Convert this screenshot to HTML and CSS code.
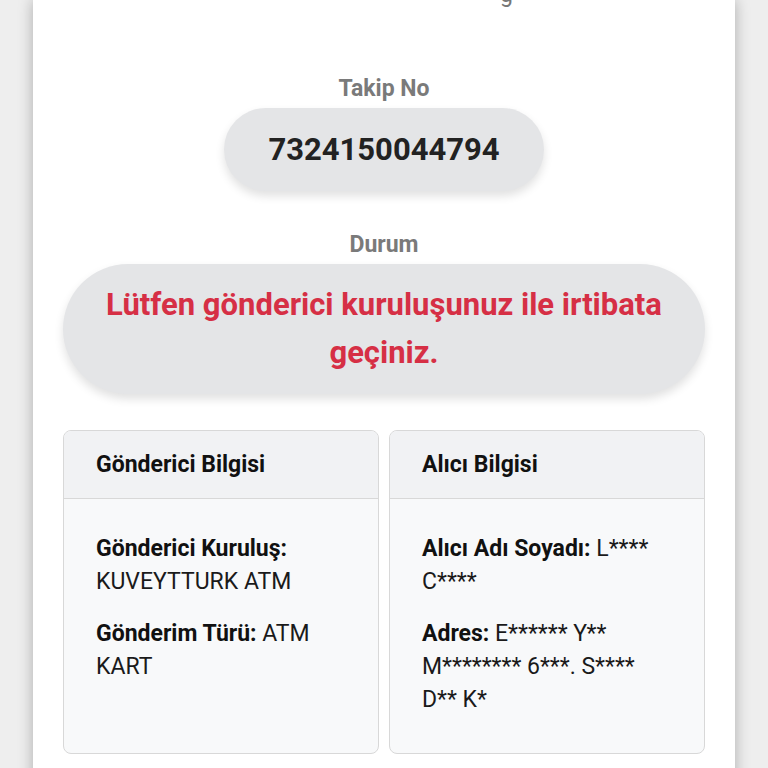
FILE: index.html
```html
<!DOCTYPE html>
<html lang="tr">
<head>
<meta charset="utf-8">
<title>Gönderi Takip</title>
<link rel="stylesheet" href="styles.css">
</head>
<body>
<div class="page">
  <div class="cut-row"><span class="cut-text">g</span></div>
  <section class="field">
    <div class="field-label">Takip No</div>
    <div class="pill pill-track">7324150044794</div>
  </section>
  <section class="field field-status">
    <div class="field-label">Durum</div>
    <div class="pill pill-status">Lütfen gönderici kuruluşunuz ile irtibata geçiniz.</div>
  </section>
  <div class="cards">
    <div class="card">
      <div class="card-header">Gönderici Bilgisi</div>
      <div class="card-body">
        <p><b>Gönderici Kuruluş:</b> KUVEYTTURK ATM</p>
        <p><b>Gönderim Türü:</b> ATM KART</p>
      </div>
    </div>
    <div class="card">
      <div class="card-header">Alıcı Bilgisi</div>
      <div class="card-body">
        <p><b>Alıcı Adı Soyadı:</b> L**** C****</p>
        <p><b>Adres:</b> E****** Y** M******** 6***. S**** D** K*</p>
      </div>
    </div>
  </div>
</div>
</body>
</html>
```
FILE: styles.css
```css
html, body {
  margin: 0;
  padding: 0;
}
body {
  background: #eeeeee;
  font-family: Roboto, "Noto Sans", "Liberation Sans", sans-serif;
  color: #212529;
}
.page {
  width: 642px;
  margin: 0 auto;
  padding: 0 30px 20px;
  background: #ffffff;
  box-shadow: 0 0 14px rgba(0, 0, 0, 0.28);
  min-height: 768px;
}
.cut-row {
  height: 10px;
  overflow: hidden;
  position: relative;
}
.cut-text {
  position: absolute;
  left: 437px;
  top: -17px;
  font-size: 23px;
  line-height: 24px;
  color: #777777;
}
.field {
  display: flex;
  flex-direction: column;
  align-items: center;
  padding-top: 67px;
}
.field-status {
  padding-top: 42px;
}
.field-label {
  font-size: 23px;
  line-height: 24px;
  font-weight: 700;
  color: #7a7a7a;
  margin-bottom: 7px;
}
.pill {
  background: #e4e5e7;
  box-shadow: 0 5px 10px rgba(0, 0, 0, 0.12);
  text-align: center;
  font-weight: 700;
}
.pill-track {
  width: 320px;
  height: 83px;
  border-radius: 42px;
  display: flex;
  align-items: center;
  justify-content: center;
  font-size: 31px;
  color: #222222;
}
.pill-status {
  align-self: stretch;
  border-radius: 65px;
  padding: 17px 30px;
  font-size: 31px;
  line-height: 48px;
  color: #d62f45;
}
.cards {
  display: grid;
  grid-template-columns: 1fr 1fr;
  gap: 10px;
  margin-top: 36px;
}
.card {
  border: 1px solid #d8d8d8;
  border-radius: 8px;
  background: #f8f9fa;
  overflow: hidden;
  height: 322px;
}
.card-header {
  background: #f1f2f4;
  border-bottom: 1px solid #d8d8d8;
  height: 67px;
  display: flex;
  align-items: center;
  padding: 0 32px;
  font-size: 23px;
  font-weight: 700;
  color: #111111;
}
.card-body {
  padding: 33px 32px 20px;
  font-size: 23px;
  line-height: 33px;
  color: #1a1a1a;
}
.card-body p {
  margin: 0 0 19px;
}
.card-body b {
  font-weight: 700;
  color: #111111;
}
```
